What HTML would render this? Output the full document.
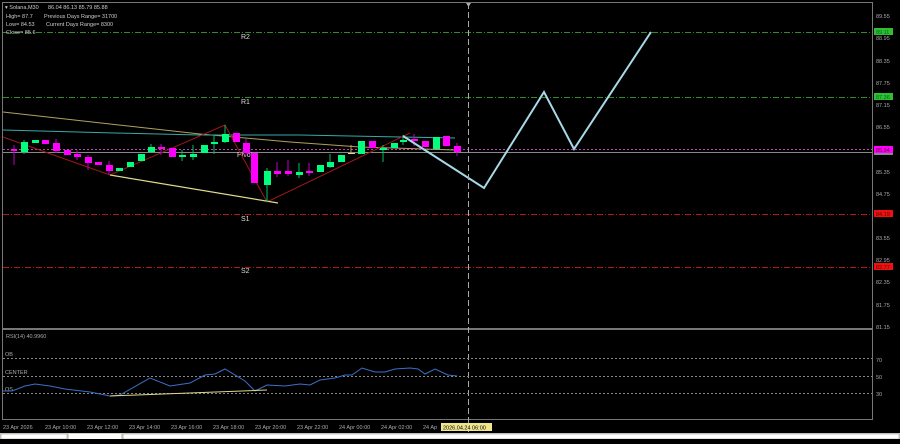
<!DOCTYPE html>
<html><head><meta charset="utf-8"><style>
body{margin:0;width:900px;height:439px;background:#000;overflow:hidden;font-family:"Liberation Sans",sans-serif}
</style></head><body>
<svg width="900" height="439" xmlns="http://www.w3.org/2000/svg" font-family="Liberation Sans, sans-serif">
<rect width="900" height="439" fill="#000"/>
<rect x="2.5" y="2.5" width="870" height="326" fill="none" stroke="#777" stroke-width="1"/>
<rect x="2.5" y="329.5" width="870" height="90" fill="none" stroke="#777" stroke-width="1"/>
<rect x="0" y="433" width="900" height="6" fill="#d4d0c8"/>
<rect x="1" y="434" width="66" height="5" fill="#fff" stroke="#888" stroke-width="0.5"/>
<rect x="69" y="434" width="52" height="5" fill="#fff"/>
<rect x="123" y="434" width="776" height="5" fill="#fff" stroke="#888" stroke-width="0.5"/>
<g stroke-width="1" stroke-dasharray="6,2,1,2">
<line x1="3" y1="32.5" x2="872" y2="32.5" stroke="#2e8b2e"/>
<line x1="3" y1="97.5" x2="872" y2="97.5" stroke="#2e8b2e"/>
<line x1="3" y1="214.5" x2="872" y2="214.5" stroke="#b01818"/>
<line x1="3" y1="267.5" x2="872" y2="267.5" stroke="#b01818"/>
</g>
<line x1="3" y1="152.5" x2="872" y2="152.5" stroke="#888"/>
<line x1="3" y1="149.5" x2="872" y2="149.5" stroke="#c040c0" stroke-dasharray="2,2"/>
<g fill="#ddd" font-size="7">
<text x="241" y="39">R2</text><text x="241" y="104">R1</text><text x="237" y="157">Pivot</text>
<text x="241" y="221">S1</text><text x="241" y="273">S2</text>
</g>
<polyline points="3,112 110,124 200,134 290,142 360,147 455,150" fill="none" stroke="#b0a060" stroke-width="1"/>
<polyline points="3,130 115,133 200,135 300,135 455,138" fill="none" stroke="#3aa8a8" stroke-width="1"/>
<polyline points="3,137 110,175 225,125 267,202 410,133" fill="none" stroke="#a01818" stroke-width="1"/>
<line x1="110" y1="175" x2="278" y2="203" stroke="#e0d890" stroke-width="1.2"/>
<g>
<line x1="14" y1="145" x2="14" y2="165" stroke="#c000c0"/>
<rect x="11" y="149" width="6" height="2" fill="#ff00ff"/>
<line x1="24" y1="140" x2="24" y2="154" stroke="#00c060"/><rect x="21" y="142" width="7" height="10" fill="#00ff7f"/>
<rect x="32" y="140" width="7" height="3" fill="#00ff7f"/>
<rect x="42" y="140" width="7" height="4" fill="#ff00ff"/>
<line x1="56" y1="139" x2="56" y2="153" stroke="#c000c0"/><rect x="53" y="143" width="7" height="8" fill="#ff00ff"/>
<rect x="64" y="150" width="7" height="5" fill="#ff00ff"/>
<line x1="77" y1="150" x2="77" y2="160" stroke="#c000c0"/><rect x="74" y="154" width="7" height="3" fill="#ff00ff"/>
<line x1="88" y1="155" x2="88" y2="170" stroke="#c000c0"/><rect x="85" y="157" width="7" height="6" fill="#ff00ff"/>
<rect x="95" y="162" width="7" height="3" fill="#ff00ff"/>
<line x1="109" y1="161" x2="109" y2="175" stroke="#c000c0"/><rect x="106" y="165" width="7" height="6" fill="#ff00ff"/>
<rect x="116" y="168" width="7" height="3" fill="#00ff7f"/>
<rect x="127" y="162" width="7" height="5" fill="#00ff7f"/>
<rect x="138" y="154" width="7" height="7" fill="#00ff7f"/>
<line x1="151" y1="144" x2="151" y2="152" stroke="#00c060"/><rect x="148" y="147" width="7" height="5" fill="#00ff7f"/>
<line x1="161" y1="144" x2="161" y2="155" stroke="#c000c0"/><rect x="158" y="147" width="7" height="2" fill="#ff00ff"/>
<rect x="169" y="148" width="7" height="9" fill="#ff00ff"/>
<line x1="182" y1="150" x2="182" y2="161" stroke="#00c060"/><rect x="179" y="155" width="7" height="2" fill="#00ff7f"/>
<line x1="193" y1="145" x2="193" y2="160" stroke="#00c060"/><rect x="190" y="154" width="7" height="3" fill="#00ff7f"/>
<rect x="201" y="145" width="7" height="8" fill="#00ff7f"/>
<line x1="214" y1="135" x2="214" y2="154" stroke="#00c060"/><rect x="211" y="142" width="7" height="2" fill="#00ff7f"/>
<line x1="225" y1="125" x2="225" y2="143" stroke="#00c060"/><rect x="222" y="134" width="7" height="8" fill="#00ff7f"/>
<rect x="233" y="133" width="7" height="9" fill="#ff00ff"/>
<line x1="246" y1="139" x2="246" y2="156" stroke="#c000c0"/><rect x="243" y="143" width="7" height="10" fill="#ff00ff"/>
<rect x="251" y="153" width="7" height="30" fill="#ff00ff"/>
<line x1="267" y1="168" x2="267" y2="202" stroke="#00c060"/><rect x="264" y="171" width="7" height="14" fill="#00ff7f"/>
<line x1="277" y1="162" x2="277" y2="177" stroke="#c000c0"/><rect x="274" y="171" width="7" height="3" fill="#ff00ff"/>
<line x1="288" y1="160" x2="288" y2="176" stroke="#c000c0"/><rect x="285" y="171" width="7" height="3" fill="#ff00ff"/>
<line x1="299" y1="163" x2="299" y2="178" stroke="#00c060"/><rect x="296" y="172" width="7" height="3" fill="#00ff7f"/>
<line x1="309" y1="163" x2="309" y2="176" stroke="#c000c0"/><rect x="306" y="171" width="7" height="2" fill="#ff00ff"/>
<rect x="317" y="165" width="7" height="7" fill="#00ff7f"/>
<line x1="330" y1="154" x2="330" y2="168" stroke="#00c060"/><rect x="327" y="162" width="7" height="5" fill="#00ff7f"/>
<rect x="338" y="155" width="7" height="7" fill="#00ff7f"/>
<line x1="351" y1="145" x2="351" y2="154" stroke="#b0a060"/><rect x="348" y="153" width="7" height="1" fill="#e0d890"/>
<rect x="358" y="141" width="7" height="13" fill="#00ff7f"/>
<rect x="369" y="141" width="7" height="7" fill="#ff00ff"/>
<line x1="383" y1="145" x2="383" y2="162" stroke="#00c060"/><rect x="380" y="148" width="7" height="2" fill="#00ff7f"/>
<rect x="391" y="143" width="7" height="5" fill="#00ff7f"/>
<line x1="403" y1="135" x2="403" y2="145" stroke="#00c060"/><rect x="400" y="140" width="7" height="2" fill="#00ff7f"/>
<line x1="414" y1="134" x2="414" y2="146" stroke="#c000c0"/><rect x="411" y="139" width="7" height="2" fill="#ff00ff"/>
<rect x="422" y="141" width="7" height="6" fill="#ff00ff"/>
<rect x="433" y="137" width="7" height="12" fill="#00ff7f"/>
<rect x="443" y="136" width="7" height="10" fill="#ff00ff"/>
<line x1="457" y1="143" x2="457" y2="156" stroke="#c000c0"/><rect x="454" y="146" width="7" height="6" fill="#ff00ff"/>
</g>
<polyline points="403,136 484,188 544,92 574,149 651,32" fill="none" stroke="#a8d8e8" stroke-width="2"/>
<line x1="468.5" y1="3" x2="468.5" y2="432" stroke="#aaa" stroke-dasharray="6,3"/>
<polygon points="466,3 471,3 468.5,7" fill="#aaa"/>
<g fill="#ccc" font-size="5.5">
<text x="5" y="9">▾ Solana,M30</text><text x="48" y="9">86.04 86.13 85.79 85.88</text>
<text x="6" y="18">High= 87.7</text><text x="44" y="18">Previous Days Range= 31700</text>
<text x="6" y="26">Low= 84.53</text><text x="46" y="26">Current Days Range= 8300</text>
<text x="6" y="34">Close= 85.6</text>
</g>
<g fill="#aaa" font-size="5.5">
<text x="876" y="18">89.55</text><text x="876" y="40">88.95</text><text x="876" y="63">88.35</text>
<text x="876" y="85">87.75</text><text x="876" y="107">87.15</text><text x="876" y="129">86.55</text>
<text x="876" y="174">85.35</text><text x="876" y="196">84.75</text><text x="876" y="240">83.55</text>
<text x="876" y="262">82.95</text><text x="876" y="284">82.35</text><text x="876" y="307">81.75</text>
<text x="876" y="329">81.15</text>
</g>
<g font-size="5.5">
<rect x="874" y="28" width="19" height="7" fill="#2ec02e"/><text x="876" y="34" fill="#063">89.11</text>
<rect x="874" y="93" width="19" height="7" fill="#2ec02e"/><text x="876" y="99" fill="#063">87.36</text>
<rect x="874" y="146" width="19" height="8" fill="#ff00ff"/><rect x="874" y="153" width="19" height="2" fill="#888"/><text x="876" y="152" fill="#603">85.94</text>
<rect x="874" y="210" width="19" height="7" fill="#f01010"/><text x="876" y="216" fill="#600">84.19</text>
<rect x="874" y="263" width="19" height="7" fill="#f01010"/><text x="876" y="269" fill="#600">82.77</text>
</g>
<g stroke="#888" stroke-dasharray="2,2"><line x1="3" y1="358.5" x2="872" y2="358.5"/><line x1="3" y1="376.5" x2="872" y2="376.5"/><line x1="3" y1="393.5" x2="872" y2="393.5"/></g>
<g fill="#aaa" font-size="5.5"><text x="6" y="338">RSI(14) 40.9960</text><text x="5" y="356">OB</text><text x="5" y="374">CENTER</text><text x="5" y="391">OS</text>
<text x="876" y="362">70</text><text x="876" y="379">50</text><text x="876" y="396">30</text></g>
<polyline points="3,391 12,391 25,386 35,384 50,386 65,389 90,392 110,396 120,395 150,378 170,386 190,383 205,375 215,374 225,369 245,381 255,391 267,385 285,386 300,384 310,385 320,380 335,378 345,375 352,375 362,368 375,372 385,372 395,369 410,368 418,369 425,374 435,369 448,375 457,376" fill="none" stroke="#3a70c8" stroke-width="1"/>
<line x1="110" y1="396" x2="267" y2="390" stroke="#e0d890" stroke-width="1"/>
<g fill="#aaa" font-size="5.5">
<text x="3" y="429">23 Apr 2026</text><text x="45" y="429">23 Apr 10:00</text><text x="87" y="429">23 Apr 12:00</text>
<text x="129" y="429">23 Apr 14:00</text><text x="171" y="429">23 Apr 16:00</text><text x="213" y="429">23 Apr 18:00</text>
<text x="255" y="429">23 Apr 20:00</text><text x="297" y="429">23 Apr 22:00</text><text x="339" y="429">24 Apr 00:00</text>
<text x="381" y="429">24 Apr 02:00</text><text x="423" y="429">24 Ap</text>
</g>
<rect x="441" y="423" width="51" height="8" fill="#f0e68c"/><text x="443" y="429.5" font-size="5.5" fill="#000">2026.04.24 06:00</text>
</svg>
</body></html>
